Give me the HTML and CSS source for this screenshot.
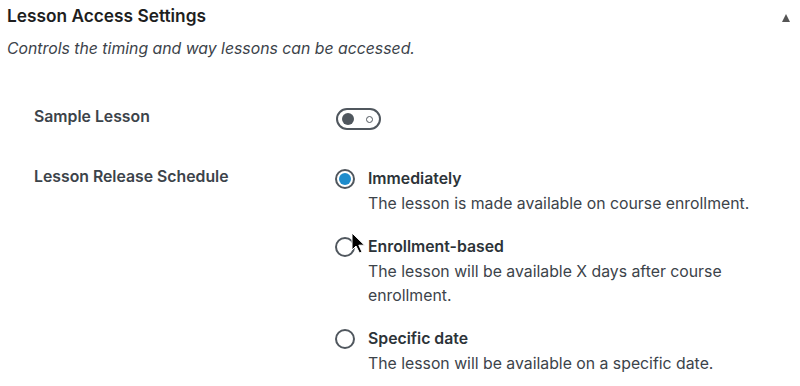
FILE: index.html
```html
<!DOCTYPE html>
<html>
<head>
<meta charset="utf-8">
<link rel="stylesheet" href="styles.css">
</head>
<body>
<div class="panel">
  <div class="header">
    <h2 class="title">Lesson Access Settings</h2>
    <span class="caret"></span>
  </div>
  <p class="intro">Controls the timing and way lessons can be accessed.</p>
  <div class="fields">
    <div class="row row-toggle">
      <div class="label">Sample Lesson</div>
      <div class="control">
        <span class="toggle"><span class="knob"></span><span class="dot"></span></span>
      </div>
    </div>
    <div class="row">
      <div class="label">Lesson Release Schedule</div>
      <div class="control options">
        <div class="option">
          <span class="radio checked"></span>
          <div class="opt-text">
            <div class="opt-title">Immediately</div>
            <div class="opt-desc">The lesson is made available on course enrollment.</div>
          </div>
        </div>
        <div class="option">
          <span class="radio"></span>
          <div class="opt-text">
            <div class="opt-title">Enrollment-based</div>
            <div class="opt-desc">The lesson will be available X days after course<br>enrollment.</div>
          </div>
        </div>
        <div class="option">
          <span class="radio"></span>
          <div class="opt-text">
            <div class="opt-title">Specific date</div>
            <div class="opt-desc">The lesson will be available on a specific date.</div>
          </div>
        </div>
      </div>
    </div>
  </div>
  <svg class="cursor" width="15" height="23" viewBox="0 0 15 23">
    <path d="M1 1 L1 18 L5 14 L8.5 21 L11 20 L7.8 13.2 L13.5 13.2 Z" fill="#000" stroke="#fff" stroke-width="1"/>
  </svg>
</div>
</body>
</html>
```
FILE: styles.css
```css
* { box-sizing: border-box; }
html, body { margin: 0; padding: 0; background: #fff; }
body {
  font-family: Inter, "Noto Sans", "Liberation Sans", sans-serif;
  color: #1e1e1e;
  width: 800px;
  height: 386px;
  overflow: hidden;
}
.panel { position: relative; padding: 0 0 0 7px; }
.header {
  display: flex;
  align-items: center;
  justify-content: space-between;
  height: 30px;
  padding-right: 10px;
}
.title {
  margin: 0;
  font-size: 17.3px;
  font-weight: 600;
  color: #1e1e1e;
}
.caret {
  width: 0; height: 0;
  border-left: 4.5px solid transparent;
  border-right: 4.5px solid transparent;
  border-bottom: 8px solid #555;
  margin-top: 5px;
}
.intro {
  margin: 9px 0 0 0;
  font-size: 15.8px;
  font-style: italic;
  color: #3c434a;
  line-height: 20px;
}
.fields { padding-left: 27px; margin-top: 48px; }
.row { display: flex; }
.label {
  width: 301px;
  font-size: 15.8px;
  font-weight: 600;
  color: #3c434a;
  line-height: 20px;
}
.row-toggle { height: 60px; }
.control { flex: 1; }
.toggle {
  display: flex;
  align-items: center;
  justify-content: space-between;
  width: 45px;
  height: 22px;
  border: 2px solid #50575e;
  border-radius: 11px;
  padding: 0 6px 0 4px;
  margin-top: 1px;
  margin-left: 1px;
}
.knob { width: 12px; height: 12px; border-radius: 50%; background: #50575e; }
.dot { width: 7px; height: 7px; border-radius: 50%; border: 1.5px solid #50575e; }
.options { display: flex; flex-direction: column; gap: 18px; margin-top: -1px; }
.option { display: flex; gap: 13px; }
.radio {
  flex: none;
  width: 20px; height: 20px;
  border-radius: 50%;
  border: 2px solid #50575e;
  margin-top: 3px;
  display: flex; align-items: center; justify-content: center;
}
.radio.checked::after {
  content: "";
  width: 12px; height: 12px; border-radius: 50%; background: #1e8ccc;
}
.opt-title {
  font-size: 15.8px;
  font-weight: 600;
  color: #2c3338;
  line-height: 26px;
}
.opt-desc {
  font-size: 15.8px;
  color: #3c434a;
  line-height: 24px;
}
.cursor { position: absolute; left: 351px; top: 232px; }
```
